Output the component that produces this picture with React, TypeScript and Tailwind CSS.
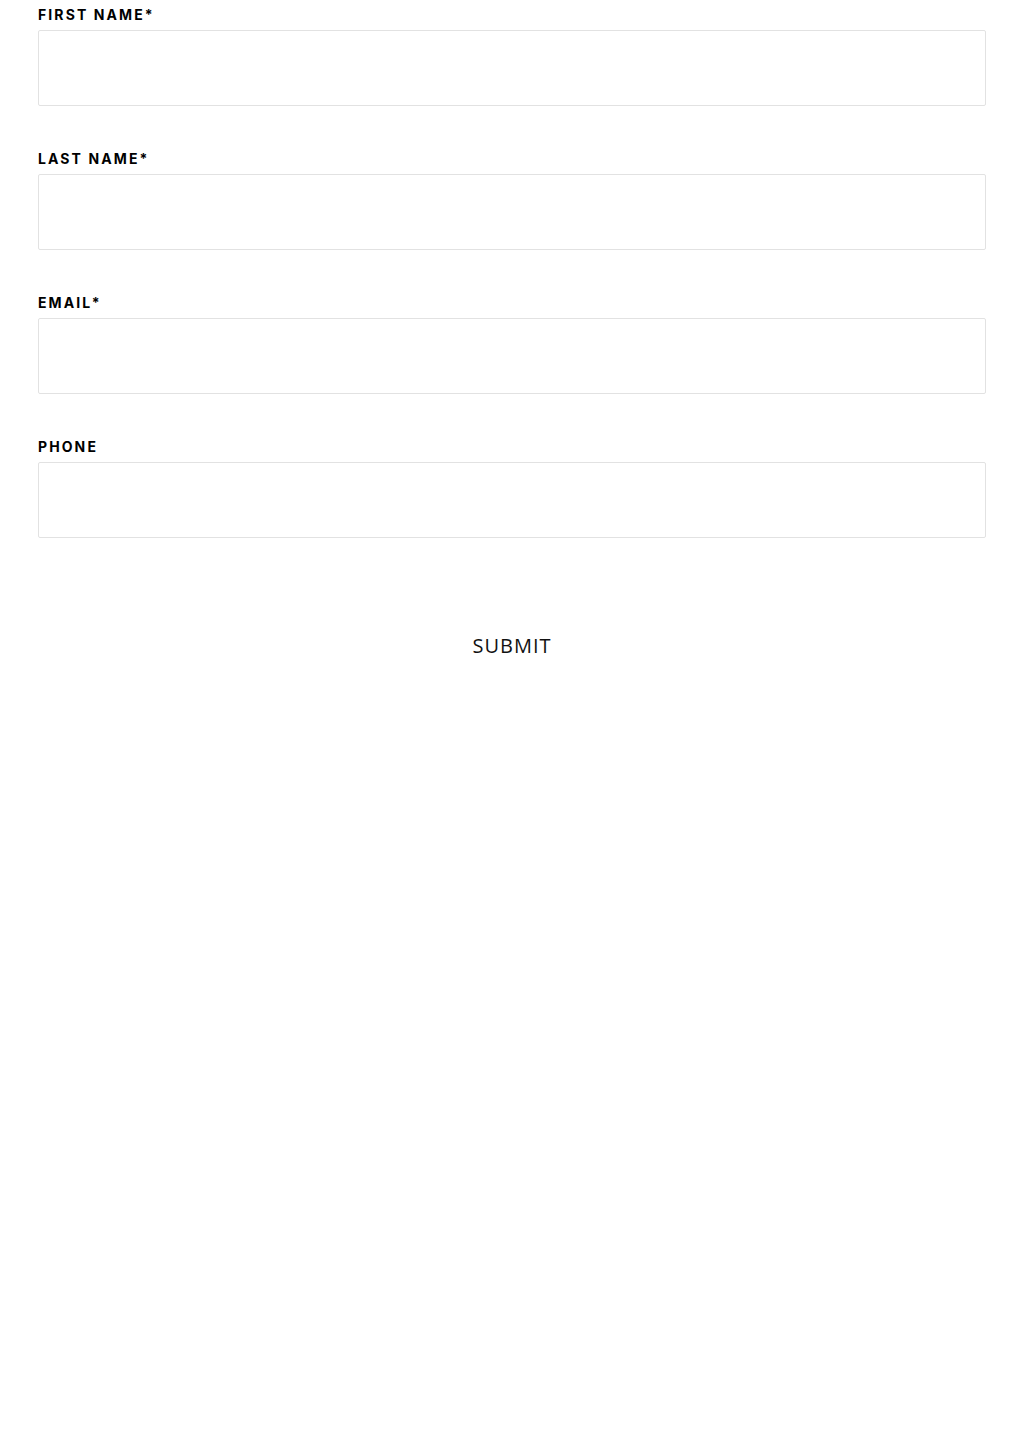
const fields = [
  {id: "first_name", label: "First Name*"},
  {id: "last_name", label: "Last Name*"},
  {id: "email", label: "Email*"},
  {id: "phone", label: "Phone"},
];

export default function App() {
  return (
    <div className="min-h-[1449px] bg-white px-[38px]">
      <form className="flex flex-col" onSubmit={(e) => e.preventDefault()}>
        {fields.map((field) => (
          <div key={field.id} className="flex flex-col mb-[38px]">
            <label
              htmlFor={field.id}
              className="pt-[5px] h-[30px] text-[14px] leading-[20px] font-bold uppercase tracking-[0.15em] text-black"
              style={{fontFamily: "Inter, 'Noto Sans', sans-serif"}}
            >
              {field.label}
            </label>
            <input
              id={field.id}
              type="text"
              className="h-[76px] w-full rounded-[2px] border border-[#e2e2e2] bg-white"
            />
          </div>
        ))}
        <div className="flex justify-center pt-[55px]">
          <button
            type="submit"
            className="text-[20px] leading-[30px] uppercase tracking-[0.05em] text-[#111]"
            style={{fontFamily: "'Open Sans', sans-serif"}}
          >
            Submit
          </button>
        </div>
      </form>
    </div>
  );
}
